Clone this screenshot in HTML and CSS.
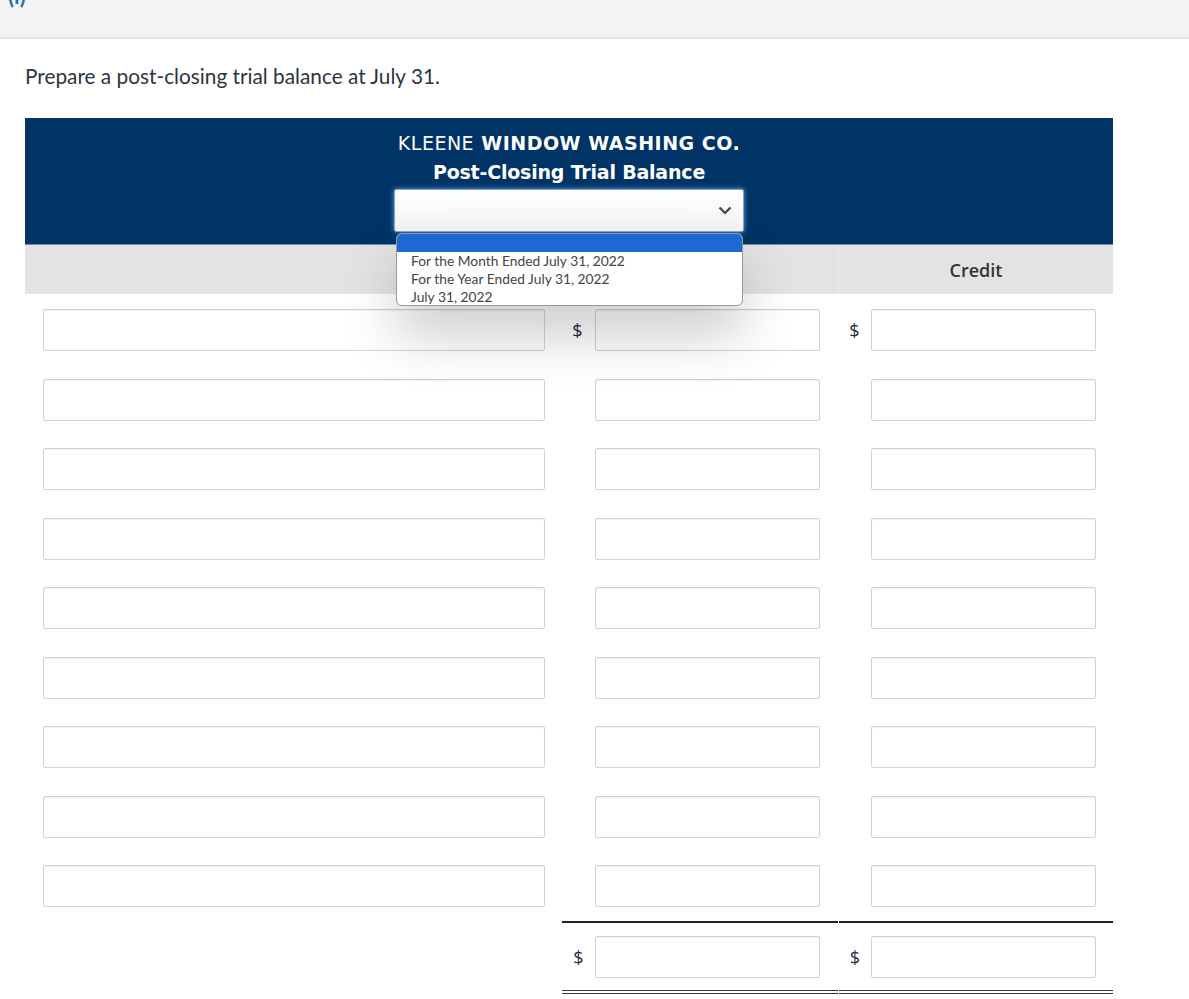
FILE: index.html
```html
<!DOCTYPE html>
<html>
<head>
<meta charset="utf-8">
<link rel="stylesheet" href="styles.css">
</head>
<body>
<div class="topbar"><span class="info">(i)</span></div>
<div class="content">
  <p class="prompt">Prepare a post-closing trial balance at July 31.</p>
  <div class="sheet">
    <div class="banner">
      <div class="title wide"><span class="reg">KLEENE</span> WINDOW WASHING CO.</div>
      <div class="title">Post-Closing Trial Balance</div>
      <div class="select-wrap">
        <div class="select">
          <svg class="chev" width="14" height="9" viewBox="0 0 14 9"><path d="M1.5 1.5 L7 7 L12.5 1.5" fill="none" stroke="#444" stroke-width="2.2"/></svg>
        </div>
        <div class="dropdown">
          <div class="opt sel"></div>
          <div class="opt">For the Month Ended July 31, 2022</div>
          <div class="opt">For the Year Ended July 31, 2022</div>
          <div class="opt">July 31, 2022</div>
        </div>
      </div>
    </div>
    <div class="grid head">
      <div class="hcell"></div>
      <div class="hcell div">Debit</div>
      <div class="hcell div">Credit</div>
    </div>
    <div class="body">
      <div class="grid row">
        <div class="c1"><div class="box"></div></div>
        <div class="c2"><span class="dol">$</span><div class="box"></div></div>
        <div class="c3"><span class="dol">$</span><div class="box"></div></div>
      </div>
      <div class="grid row">
        <div class="c1"><div class="box"></div></div>
        <div class="c2"><span class="dol"></span><div class="box"></div></div>
        <div class="c3"><span class="dol"></span><div class="box"></div></div>
      </div>
      <div class="grid row">
        <div class="c1"><div class="box"></div></div>
        <div class="c2"><span class="dol"></span><div class="box"></div></div>
        <div class="c3"><span class="dol"></span><div class="box"></div></div>
      </div>
      <div class="grid row">
        <div class="c1"><div class="box"></div></div>
        <div class="c2"><span class="dol"></span><div class="box"></div></div>
        <div class="c3"><span class="dol"></span><div class="box"></div></div>
      </div>
      <div class="grid row">
        <div class="c1"><div class="box"></div></div>
        <div class="c2"><span class="dol"></span><div class="box"></div></div>
        <div class="c3"><span class="dol"></span><div class="box"></div></div>
      </div>
      <div class="grid row">
        <div class="c1"><div class="box"></div></div>
        <div class="c2"><span class="dol"></span><div class="box"></div></div>
        <div class="c3"><span class="dol"></span><div class="box"></div></div>
      </div>
      <div class="grid row">
        <div class="c1"><div class="box"></div></div>
        <div class="c2"><span class="dol"></span><div class="box"></div></div>
        <div class="c3"><span class="dol"></span><div class="box"></div></div>
      </div>
      <div class="grid row">
        <div class="c1"><div class="box"></div></div>
        <div class="c2"><span class="dol"></span><div class="box"></div></div>
        <div class="c3"><span class="dol"></span><div class="box"></div></div>
      </div>
      <div class="grid row last">
        <div class="c1"><div class="box"></div></div>
        <div class="c2"><span class="dol"></span><div class="box"></div></div>
        <div class="c3"><span class="dol"></span><div class="box"></div></div>
      </div>
      <div class="grid total">
        <div class="c1"></div>
        <div class="c2 tot"><span class="dol">$</span><div class="box"></div></div>
        <div class="c3 tot"><span class="dol">$</span><div class="box"></div></div>
      </div>
    </div>
  </div>
</div>
</body>
</html>
```
FILE: styles.css
```css
* { box-sizing: border-box; }
html, body { margin: 0; padding: 0; background: #fff; }
body { font-family: Lato, "Liberation Sans", sans-serif; color: #333; }

.topbar {
  height: 39px;
  background: #f3f3f3;
  border-bottom: 2px solid #e2e2e2;
  overflow: hidden;
  padding-left: 8px;
}
.info {
  display: block;
  margin-top: -17px;
  font-size: 22px;
  line-height: 26px;
  color: #1a74b0;
  font-weight: 700;
}

.content { padding: 0 76px 0 25px; }
.prompt {
  margin: 24px 0 0 0;
  font-size: 20.8px;
  line-height: 26px;
  color: #2d3540;
}

.sheet { margin-top: 29px; width: 1088px; }

.banner {
  background: #003366;
  height: 127px;
  display: flex;
  flex-direction: column;
  align-items: center;
  padding-top: 11px;
  border-bottom: 1px solid #6a8bb0;
}
.title {
  font-family: "DejaVu Sans", sans-serif;
  font-weight: 700;
  font-size: 19px;
  line-height: 29px;
  color: #fff;
  letter-spacing: -0.2px;
}
.title.wide { letter-spacing: 0.5px; }
.title .reg { font-weight: 400; }

.select-wrap { position: relative; margin-top: 2px; }
.select {
  width: 350px;
  height: 43px;
  background: linear-gradient(#ffffff, #f3f3f3);
  border: 1px solid #7da6d6;
  border-radius: 2px;
  box-shadow: 0 0 5px rgba(120, 170, 235, 0.9);
  display: flex;
  align-items: center;
  justify-content: flex-end;
  padding-right: 11px;
}
.dropdown {
  position: absolute;
  top: 44px;
  left: 2px;
  width: 347px;
  height: 73px;
  background: #fff;
  border: 1px solid #9a9a9a;
  border-radius: 6px;
  overflow: hidden;
  box-shadow: 0 30px 55px rgba(0, 0, 0, 0.2);
  z-index: 5;
  font-family: Lato, sans-serif;
  font-size: 13.8px;
  color: #444;
}
.opt { height: 18px; line-height: 18px; padding-left: 14px; }
.opt.sel { background: #1d69d3; height: 18px; }

.grid { display: grid; grid-template-columns: 535px 278px 275px; }
.head { background: #e3e3e3; height: 49px; }
.hcell {
  font-family: "Open Sans", sans-serif;
  font-weight: 600;
  font-size: 18px;
  color: #333;
  display: flex;
  align-items: center;
  justify-content: center;
}
.hcell.div { border-left: 1px solid #ececec; }

.body { padding-top: 15px; }
.row { height: 69.5px; }
.row.last { height: 56px; }
.c1 { padding-left: 18px; padding-right: 15px; }
.c2, .c3 { display: flex; align-items: flex-start; }
.c2 .dol { width: 35px; }
.c3 .dol { width: 33px; }
.dol {
  height: 42px;
  display: flex;
  align-items: center;
  justify-content: center;
  font-family: "Open Sans", sans-serif;
  font-size: 18px;
  color: #2c2c44;
  flex: none;
}
.box {
  height: 42px;
  border: 1px solid #d2d2d2;
  border-radius: 2px;
  background: #fff;
  box-shadow: inset 0 1px 1px rgba(0, 0, 0, 0.06);
}
.c1 .box { width: 502px; }
.c2 .box, .c3 .box { width: 225px; }

.total .c2 { margin-left: 2px; }
.tot {
  border-top: 2px solid #222;
  border-bottom: 4px double #333;
  padding-top: 13px;
  height: 73px;
}
.total .c2.tot .dol { width: 33px; }
.total .c3.tot { margin-left: 1px; }
.total .c3.tot .dol { width: 32px; }
```
